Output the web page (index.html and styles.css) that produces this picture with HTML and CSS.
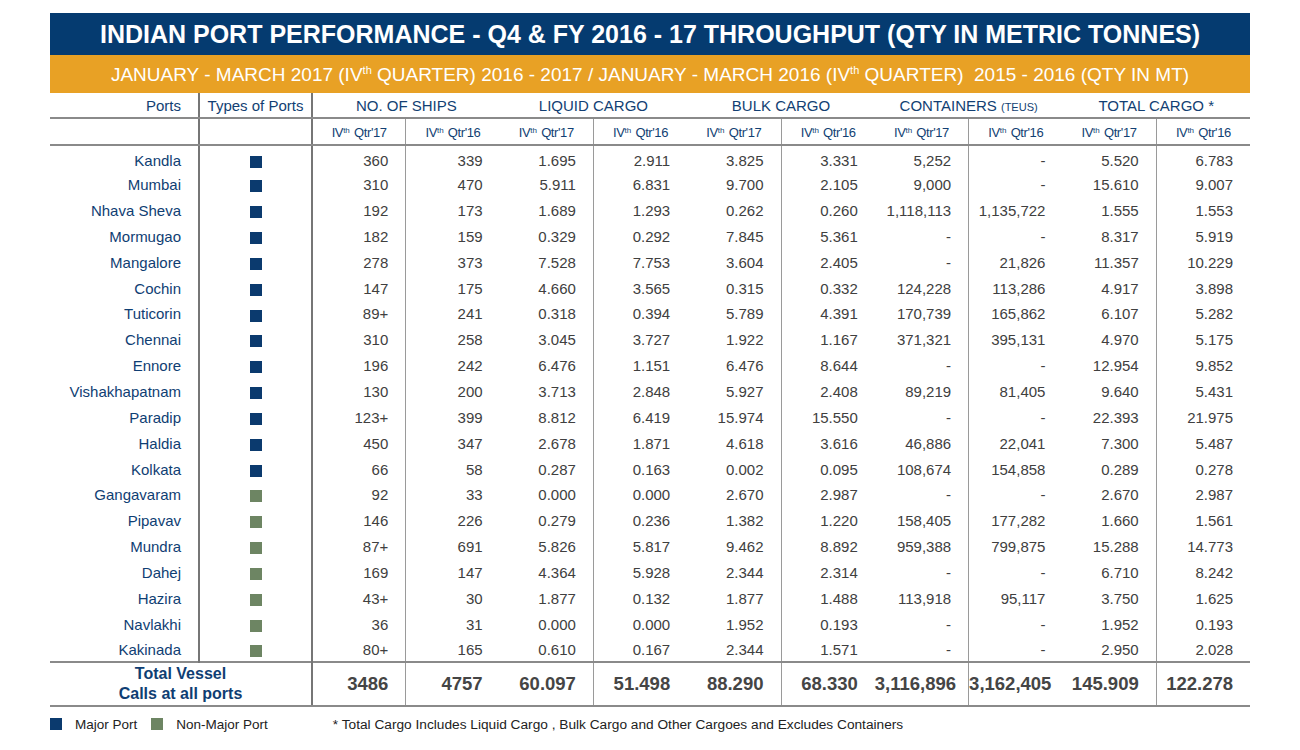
FILE: index.html
```html
<!DOCTYPE html>
<html>
<head>
<meta charset="utf-8">
<link rel="stylesheet" href="styles.css">
</head>
<body>
<div class="page">
  <div class="title">INDIAN PORT PERFORMANCE - Q4 &amp; FY 2016 - 17 THROUGHPUT (QTY IN METRIC TONNES)</div>
  <div class="subtitle">JANUARY - MARCH 2017 (IV<sup>th</sup> QUARTER) 2016 - 2017 / JANUARY - MARCH 2016 (IV<sup>th</sup> QUARTER)&nbsp; 2015 - 2016 (QTY IN MT)</div>
  <table class="grid">
    <colgroup>
      <col class="c-port"><col class="c-type">
      <col class="c-num"><col class="c-num"><col class="c-num"><col class="c-num"><col class="c-num">
      <col class="c-num"><col class="c-num"><col class="c-num"><col class="c-num"><col class="c-num">
    </colgroup>
    <thead>
      <tr class="h1">
        <th class="port">Ports</th>
        <th class="type">Types of Ports</th>
        <th colspan="2">NO. OF SHIPS</th>
        <th colspan="2">LIQUID CARGO</th>
        <th colspan="2">BULK CARGO</th>
        <th colspan="2">CONTAINERS <span class="sc">(TEUS)</span></th>
        <th colspan="2">TOTAL CARGO *</th>
      </tr>
      <tr class="h2">
        <th class="port"></th>
        <th class="type"></th>
        <th class="odd">IV<sup>th</sup> Qtr'17</th><th>IV<sup>th</sup> Qtr'16</th>
        <th class="odd">IV<sup>th</sup> Qtr'17</th><th>IV<sup>th</sup> Qtr'16</th>
        <th class="odd">IV<sup>th</sup> Qtr'17</th><th>IV<sup>th</sup> Qtr'16</th>
        <th class="odd">IV<sup>th</sup> Qtr'17</th><th>IV<sup>th</sup> Qtr'16</th>
        <th class="odd">IV<sup>th</sup> Qtr'17</th><th>IV<sup>th</sup> Qtr'16</th>
      </tr>
    </thead>
    <tbody>
      <tr><td class="port">Kandla</td><td class="type"><span class="sq major"></span></td><td class="odd">360</td><td>339</td><td class="odd">1.695</td><td>2.911</td><td class="odd">3.825</td><td>3.331</td><td class="odd">5,252</td><td>-</td><td class="odd">5.520</td><td>6.783</td></tr>
      <tr><td class="port">Mumbai</td><td class="type"><span class="sq major"></span></td><td class="odd">310</td><td>470</td><td class="odd">5.911</td><td>6.831</td><td class="odd">9.700</td><td>2.105</td><td class="odd">9,000</td><td>-</td><td class="odd">15.610</td><td>9.007</td></tr>
      <tr><td class="port">Nhava Sheva</td><td class="type"><span class="sq major"></span></td><td class="odd">192</td><td>173</td><td class="odd">1.689</td><td>1.293</td><td class="odd">0.262</td><td>0.260</td><td class="odd">1,118,113</td><td>1,135,722</td><td class="odd">1.555</td><td>1.553</td></tr>
      <tr><td class="port">Mormugao</td><td class="type"><span class="sq major"></span></td><td class="odd">182</td><td>159</td><td class="odd">0.329</td><td>0.292</td><td class="odd">7.845</td><td>5.361</td><td class="odd">-</td><td>-</td><td class="odd">8.317</td><td>5.919</td></tr>
      <tr><td class="port">Mangalore</td><td class="type"><span class="sq major"></span></td><td class="odd">278</td><td>373</td><td class="odd">7.528</td><td>7.753</td><td class="odd">3.604</td><td>2.405</td><td class="odd">-</td><td>21,826</td><td class="odd">11.357</td><td>10.229</td></tr>
      <tr><td class="port">Cochin</td><td class="type"><span class="sq major"></span></td><td class="odd">147</td><td>175</td><td class="odd">4.660</td><td>3.565</td><td class="odd">0.315</td><td>0.332</td><td class="odd">124,228</td><td>113,286</td><td class="odd">4.917</td><td>3.898</td></tr>
      <tr><td class="port">Tuticorin</td><td class="type"><span class="sq major"></span></td><td class="odd">89+</td><td>241</td><td class="odd">0.318</td><td>0.394</td><td class="odd">5.789</td><td>4.391</td><td class="odd">170,739</td><td>165,862</td><td class="odd">6.107</td><td>5.282</td></tr>
      <tr><td class="port">Chennai</td><td class="type"><span class="sq major"></span></td><td class="odd">310</td><td>258</td><td class="odd">3.045</td><td>3.727</td><td class="odd">1.922</td><td>1.167</td><td class="odd">371,321</td><td>395,131</td><td class="odd">4.970</td><td>5.175</td></tr>
      <tr><td class="port">Ennore</td><td class="type"><span class="sq major"></span></td><td class="odd">196</td><td>242</td><td class="odd">6.476</td><td>1.151</td><td class="odd">6.476</td><td>8.644</td><td class="odd">-</td><td>-</td><td class="odd">12.954</td><td>9.852</td></tr>
      <tr><td class="port">Vishakhapatnam</td><td class="type"><span class="sq major"></span></td><td class="odd">130</td><td>200</td><td class="odd">3.713</td><td>2.848</td><td class="odd">5.927</td><td>2.408</td><td class="odd">89,219</td><td>81,405</td><td class="odd">9.640</td><td>5.431</td></tr>
      <tr><td class="port">Paradip</td><td class="type"><span class="sq major"></span></td><td class="odd">123+</td><td>399</td><td class="odd">8.812</td><td>6.419</td><td class="odd">15.974</td><td>15.550</td><td class="odd">-</td><td>-</td><td class="odd">22.393</td><td>21.975</td></tr>
      <tr><td class="port">Haldia</td><td class="type"><span class="sq major"></span></td><td class="odd">450</td><td>347</td><td class="odd">2.678</td><td>1.871</td><td class="odd">4.618</td><td>3.616</td><td class="odd">46,886</td><td>22,041</td><td class="odd">7.300</td><td>5.487</td></tr>
      <tr><td class="port">Kolkata</td><td class="type"><span class="sq major"></span></td><td class="odd">66</td><td>58</td><td class="odd">0.287</td><td>0.163</td><td class="odd">0.002</td><td>0.095</td><td class="odd">108,674</td><td>154,858</td><td class="odd">0.289</td><td>0.278</td></tr>
      <tr><td class="port">Gangavaram</td><td class="type"><span class="sq minor"></span></td><td class="odd">92</td><td>33</td><td class="odd">0.000</td><td>0.000</td><td class="odd">2.670</td><td>2.987</td><td class="odd">-</td><td>-</td><td class="odd">2.670</td><td>2.987</td></tr>
      <tr><td class="port">Pipavav</td><td class="type"><span class="sq minor"></span></td><td class="odd">146</td><td>226</td><td class="odd">0.279</td><td>0.236</td><td class="odd">1.382</td><td>1.220</td><td class="odd">158,405</td><td>177,282</td><td class="odd">1.660</td><td>1.561</td></tr>
      <tr><td class="port">Mundra</td><td class="type"><span class="sq minor"></span></td><td class="odd">87+</td><td>691</td><td class="odd">5.826</td><td>5.817</td><td class="odd">9.462</td><td>8.892</td><td class="odd">959,388</td><td>799,875</td><td class="odd">15.288</td><td>14.773</td></tr>
      <tr><td class="port">Dahej</td><td class="type"><span class="sq minor"></span></td><td class="odd">169</td><td>147</td><td class="odd">4.364</td><td>5.928</td><td class="odd">2.344</td><td>2.314</td><td class="odd">-</td><td>-</td><td class="odd">6.710</td><td>8.242</td></tr>
      <tr><td class="port">Hazira</td><td class="type"><span class="sq minor"></span></td><td class="odd">43+</td><td>30</td><td class="odd">1.877</td><td>0.132</td><td class="odd">1.877</td><td>1.488</td><td class="odd">113,918</td><td>95,117</td><td class="odd">3.750</td><td>1.625</td></tr>
      <tr><td class="port">Navlakhi</td><td class="type"><span class="sq minor"></span></td><td class="odd">36</td><td>31</td><td class="odd">0.000</td><td>0.000</td><td class="odd">1.952</td><td>0.193</td><td class="odd">-</td><td>-</td><td class="odd">1.952</td><td>0.193</td></tr>
      <tr><td class="port">Kakinada</td><td class="type"><span class="sq minor"></span></td><td class="odd">80+</td><td>165</td><td class="odd">0.610</td><td>0.167</td><td class="odd">2.344</td><td>1.571</td><td class="odd">-</td><td>-</td><td class="odd">2.950</td><td>2.028</td></tr>
    </tbody>
    <tfoot>
      <tr class="total">
        <td class="label" colspan="2">Total Vessel<br>Calls at all ports</td>
        <td class="odd">3486</td><td>4757</td><td class="odd">60.097</td><td>51.498</td><td class="odd">88.290</td><td>68.330</td><td class="odd">3,116,896</td><td>3,162,405</td><td class="odd">145.909</td><td>122.278</td>
      </tr>
    </tfoot>
  </table>
  <div class="legend">
    <span class="sq major"></span><span class="ltext">Major Port</span>
    <span class="sq minor"></span><span class="ltext">Non-Major Port</span>
    <span class="note">* Total Cargo Includes Liquid Cargo , Bulk Cargo and Other Cargoes and Excludes Containers</span>
  </div>
</div>
</body>
</html>
```

FILE: styles.css
```css
html, body {
  margin: 0;
  padding: 0;
  background: #ffffff;
}
body {
  font-family: "Liberation Sans", Arial, sans-serif;
}
.page {
  width: 1200px;
  margin: 13px 0 0 50px;
}
.title {
  height: 42px;
  background: #053b70;
  color: #ffffff;
  font-weight: bold;
  font-size: 25px;
  line-height: 43px;
  text-align: center;
}
.subtitle {
  height: 38px;
  background: #e8a125;
  color: #ffffff;
  font-size: 19px;
  line-height: 40px;
  text-align: center;
}
.subtitle sup {
  font-size: 11px;
  vertical-align: 7px;
  line-height: 0;
}
.grid {
  width: 1200px;
  border-collapse: collapse;
  table-layout: fixed;
}
.c-port { width: 149px; }
.c-type { width: 113px; }
.c-num { width: 93.8px; }
.grid th, .grid td {
  padding: 0;
  white-space: nowrap;
}
.grid .h1 th {
  height: 24px;
  font-size: 15px;
  font-weight: normal;
  color: #123f73;
  text-align: center;
  border-bottom: 2px solid #8a8a8a;
  vertical-align: middle;
}
.sc {
  font-size: 11px;
}
.grid .h1 th.port {
  text-align: right;
  padding-right: 17px;
}
.grid .h2 th {
  height: 24px;
  font-size: 13px;
  font-weight: normal;
  color: #123f73;
  text-align: center;
  border-bottom: 2px solid #8a8a8a;
  letter-spacing: -0.4px;
  padding-top: 1px;
}
.grid .h2 th sup {
  font-size: 8px;
  vertical-align: 4px;
  line-height: 0;
  letter-spacing: 0;
  margin-right: 1px;
}
.grid .port {
  border-right: 2px solid #767676;
}
.grid .type {
  border-right: 2px solid #767676;
}
.grid .odd {
  border-right: 1px solid #9a9a9a;
}
.grid tbody td {
  height: 25.85px;
  font-size: 15px;
  color: #404040;
  text-align: right;
  padding-right: 17px;
  padding-top: 2px;
  vertical-align: middle;
  box-sizing: border-box;
}
.grid tbody tr:first-child td {
  padding-top: 5px;
}
.grid tbody td.port {
  color: #0f3e73;
}
.grid tbody td.type {
  text-align: center;
  padding-right: 0;
}
.sq {
  display: inline-block;
  width: 12px;
  height: 12px;
  vertical-align: middle;
}
.sq.major { background: #0b3a6e; }
.sq.minor { background: #6d8563; }
.grid .total td {
  height: 41px;
  border-top: 2px solid #8a8a8a;
  border-bottom: 2px solid #8a8a8a;
  font-size: 18.5px;
  font-weight: bold;
  color: #454545;
  text-align: right;
  padding-right: 17px;
  vertical-align: middle;
}
.grid .total td.label {
  text-align: center;
  padding-right: 0;
  font-size: 16px;
  line-height: 20px;
  color: #0f3e73;
  border-right: 2px solid #767676;
  padding-top: 1px;
}
.legend {
  display: flex;
  align-items: center;
  margin-top: 10px;
  font-size: 13.5px;
  color: #222222;
}
.legend .sq {
  margin-right: 13px;
}
.legend .ltext {
  margin-right: 14px;
}
.legend .note {
  margin-left: 51px;
  font-size: 13.7px;
}
```
